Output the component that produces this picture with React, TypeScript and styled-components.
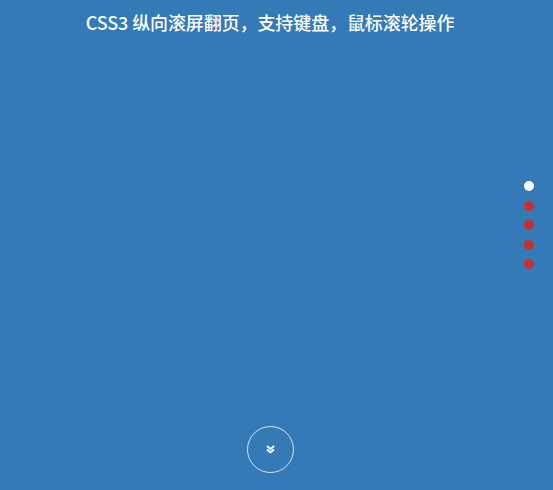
import React from "react";
import styled, { createGlobalStyle } from "styled-components";

const Global = createGlobalStyle`
  html, body { margin: 0; padding: 0; height: 100%; overflow: hidden; }
  body { background: #337ab7; font-family: "Noto Sans CJK SC", "Noto Sans", sans-serif; }
  #root { height: 100%; }
`;

const Page = styled.div`
  position: relative;
  height: 490px;
  background: #337ab7;
  padding-right: 13px;
  box-sizing: border-box;
`;

const Title = styled.h1`
  margin: 0;
  padding-top: 8px;
  text-align: center;
  color: #fff;
  font-size: 18px;
  font-weight: 500;
  line-height: 28px;
  letter-spacing: -0.1px;
`;

const Pager = styled.ul`
  position: absolute;
  right: 19px;
  top: 181px;
  margin: 0;
  padding: 0;
  list-style: none;
  display: flex;
  flex-direction: column;
  gap: 9.5px;
`;

const Dot = styled.li<{ $active?: boolean }>`
  width: 10px;
  height: 10px;
  border-radius: 50%;
  background: ${(p) => (p.$active ? "#ffffff" : "#c9302c")};
`;

const Next = styled.button`
  position: absolute;
  left: 247px;
  top: 426px;
  width: 47px;
  height: 47px;
  border-radius: 50%;
  border: 1px solid rgba(255, 255, 255, 0.8);
  background: transparent;
  padding: 0;
  display: flex;
  align-items: center;
  justify-content: center;
  cursor: pointer;
`;

export default function App() {
  return (
    <Page>
      <Global />
      <Title>CSS3 纵向滚屏翻页，支持键盘，鼠标滚轮操作</Title>
      <Pager>
        <Dot $active />
        <Dot />
        <Dot />
        <Dot />
        <Dot />
      </Pager>
      <Next aria-label="next">
        <svg width="9" height="9" viewBox="0 0 9 9">
          <path d="M1 1 L4.5 4 L8 1" stroke="#fff" strokeWidth="2" fill="none" />
          <path d="M1 4.5 L4.5 7.5 L8 4.5" stroke="#fff" strokeWidth="2" fill="none" />
        </svg>
      </Next>
    </Page>
  );
}
